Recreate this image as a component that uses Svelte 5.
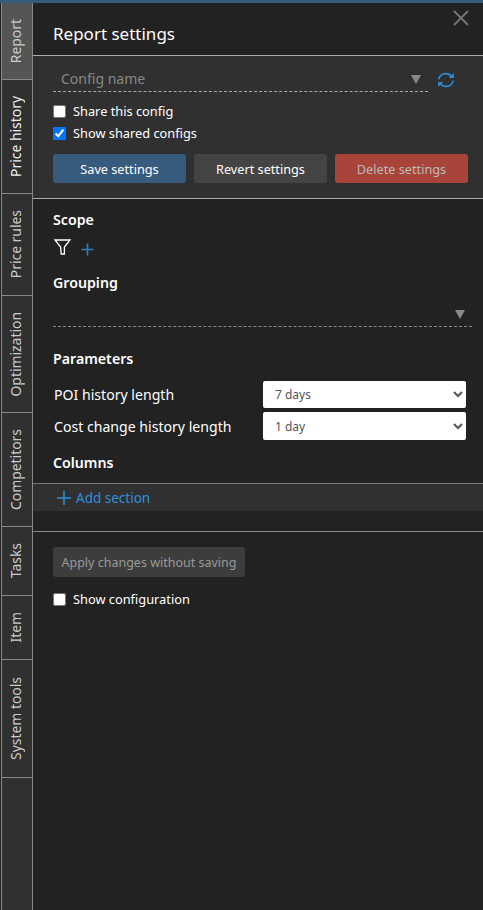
<script>
  const tabs = [
    { label: "Report", height: 77, active: true },
    { label: "Price history", height: 114 },
    { label: "Price rules", height: 102 },
    { label: "Optimization", height: 117 },
    { label: "Competitors", height: 114 },
    { label: "Tasks", height: 69 },
    { label: "Item", height: 64 },
    { label: "System tools", height: 118 },
  ];

  const params = [
    { label: "POI history length", value: "7 days", options: ["1 day", "7 days", "30 days"] },
    { label: "Cost change history length", value: "1 day", options: ["1 day", "7 days", "30 days"] },
  ];
</script>

<div class="page">
  <div class="topbar"></div>
  <div class="body">
    <nav class="sidebar">
      {#each tabs as tab}
        <div class="tab" class:active={tab.active} style:height={tab.height + "px"}>
          <span>{tab.label}</span>
        </div>
      {/each}
    </nav>

    <main class="panel">
      <header class="head">
        <h1>Report settings</h1>
        <svg class="close" viewBox="0 0 16 16" width="16" height="16">
          <path d="M1 1L15 15M15 1L1 15" stroke="#777" stroke-width="1.8" fill="none" />
        </svg>
      </header>

      <section class="config">
        <div class="config-row">
          <div class="combo">
            <span class="placeholder">Config name</span>
            <span class="caret"></span>
          </div>
          <svg class="refresh" viewBox="0 0 18 16" width="18" height="16" fill="none" stroke="#2f8fdc" stroke-width="1.6">
            <path d="M1.8 7.4C2.4 4 5.4 1.6 8.8 1.6C11.6 1.6 13.8 3 15 5.2" />
            <path d="M16.8 1V6H11.8Z" fill="#2f8fdc" stroke="none" />
            <path d="M16.2 8.6C15.6 12 12.6 14.4 9.2 14.4C6.4 14.4 4.2 13 3 10.8" />
            <path d="M1.2 15V10H6.2Z" fill="#2f8fdc" stroke="none" />
          </svg>
        </div>
        <label class="check"><input type="checkbox" /><span>Share this config</span></label>
        <label class="check second"><input type="checkbox" checked /><span>Show shared configs</span></label>
        <div class="buttons">
          <button class="btn primary">Save settings</button>
          <button class="btn">Revert settings</button>
          <button class="btn danger">Delete settings</button>
        </div>
      </section>

      <section class="settings">
        <h2>Scope</h2>
        <div class="scope-icons">
          <svg viewBox="0 0 17 16" width="17" height="16" fill="none" stroke="#fff" stroke-width="1.3">
            <path d="M1 1H16L10.4 8V15H7.2L6.6 8Z" />
          </svg>
          <svg class="plus" viewBox="0 0 13 13" width="13" height="13" stroke="#2f7fc0" stroke-width="1.6">
            <path d="M6.5 0.5V12.5M0.5 6.5H12.5" />
          </svg>
        </div>

        <h2 class="grouping">Grouping</h2>
        <div class="group-combo"><span class="caret"></span></div>

        <h2 class="parameters">Parameters</h2>
        <div class="params">
          {#each params as param}
            <div class="param">
              <span>{param.label}</span>
              <select value={param.value}>
                {#each param.options as option}
                  <option>{option}</option>
                {/each}
              </select>
            </div>
          {/each}
        </div>

        <h2 class="columns">Columns</h2>
      </section>

      <div class="add-section">
        <svg viewBox="0 0 14 14" width="14" height="14" stroke="#2f8fdc" stroke-width="1.5">
          <path d="M7 0V14M0 7H14" />
        </svg>
        <span>Add section</span>
      </div>

      <section class="footer">
        <button class="btn apply">Apply changes without saving</button>
        <label class="check"><input type="checkbox" /><span>Show configuration</span></label>
      </section>
    </main>
  </div>
</div>

<style>
  :global(body) {
    margin: 0;
    background: #222;
  }

  .page {
    width: 483px;
    height: 910px;
    overflow: hidden;
    display: flex;
    flex-direction: column;
    background: #222;
    color: #fff;
    font-family: "Noto Sans", Roboto, sans-serif;
    font-size: 13px;
  }

  .topbar {
    height: 3px;
    background: #375a7f;
    flex: none;
  }

  .body {
    flex: 1;
    display: flex;
    min-height: 0;
  }

  .sidebar {
    width: 32px;
    margin-left: 1px;
    flex: none;
    box-sizing: border-box;
    border-left: 1px solid #888;
    border-right: 1px solid #888;
    background: #303030;
  }

  .tab {
    box-sizing: border-box;
    display: flex;
    align-items: center;
    justify-content: center;
    padding-right: 3px;
    border-bottom: 1px solid #888;
    color: #ccc;
  }

  .tab.active {
    background: #555;
  }

  .tab:nth-child(2) {
    color: #eee;
  }

  .tab span {
    writing-mode: vertical-rl;
    transform: rotate(180deg);
    white-space: nowrap;
    font-size: 13.9px;
  }

  .panel {
    flex: 1;
    min-width: 0;
    display: flex;
    flex-direction: column;
  }

  .head {
    height: 52px;
    flex: none;
    box-sizing: border-box;
    position: relative;
    padding: 19px 0 0 20px;
  }

  h1 {
    margin: 0;
    font-size: 17px;
    font-weight: 400;
    line-height: 23px;
  }

  .close {
    position: absolute;
    top: 7px;
    right: 14px;
  }

  .config {
    height: 144px;
    flex: none;
    box-sizing: border-box;
    background: #303030;
    border-top: 1px solid #aaa;
    border-bottom: 1px solid #aaa;
    padding: 11px 15px 0 20px;
  }

  .config-row {
    display: flex;
    align-items: center;
    gap: 9px;
    margin-right: 13px;
    height: 25px;
  }

  .combo {
    flex: 1;
    height: 25px;
    box-sizing: border-box;
    border-bottom: 1px dashed #aaa;
    display: flex;
    align-items: center;
    justify-content: space-between;
    padding: 0 7px 0 8px;
  }

  .placeholder {
    color: #888;
    font-size: 14px;
    margin-bottom: 2px;
  }

  .caret {
    width: 0;
    height: 0;
    border-left: 5px solid transparent;
    border-right: 5px solid transparent;
    border-top: 9px solid #888;
  }

  .refresh {
    flex: none;
  }

  .check {
    display: flex;
    align-items: center;
    gap: 7px;
    height: 22px;
    margin-top: 8px;
    font-size: 12.8px;
  }

  .check.second {
    margin-top: 0;
  }

  .check input {
    width: 13px;
    height: 13px;
    margin: 0;
    accent-color: #0075ff;
  }

  .buttons {
    display: flex;
    gap: 8px;
    margin-top: 10px;
  }

  .btn {
    height: 29px;
    width: 133px;
    border: 0;
    border-radius: 3px;
    background: #444;
    color: #fff;
    font-family: inherit;
    font-size: 12.7px;
    padding: 0;
  }

  .btn.primary {
    background: #375a7f;
  }

  .btn.danger {
    background: #a8443a;
    color: #bbb;
  }

  .settings {
    flex: none;
    padding: 11px 17px 0 20px;
    height: 284px;
    box-sizing: border-box;
  }

  h2 {
    margin: 0;
    font-size: 14.2px;
    font-weight: 600;
    line-height: 19px;
  }

  .scope-icons {
    display: flex;
    align-items: center;
    gap: 10px;
    height: 20px;
    margin-top: 8px;
    padding-left: 1px;
  }

  .plus {
    margin-top: 4px;
  }

  .grouping {
    margin-top: 16px;
  }

  .group-combo {
    height: 27px;
    margin-right: -6px;
    box-sizing: border-box;
    border-bottom: 1px dashed #888;
    display: flex;
    align-items: center;
    justify-content: flex-end;
    padding: 3px 7px 0 0;
    margin-top: 8px;
  }

  .parameters {
    margin-top: 22px;
  }

  .params {
    margin-top: 13px;
    display: flex;
    flex-direction: column;
    gap: 4px;
  }

  .param {
    display: flex;
    align-items: center;
    justify-content: space-between;
    padding-left: 1px;
    font-size: 14.1px;
  }

  .param + .param select {
    height: 28px;
  }

  select {
    width: 203px;
    height: 27px;
    box-sizing: border-box;
    border: 0;
    border-radius: 2px;
    background-color: #fff;
    color: #555;
    font-family: inherit;
    font-size: 12px;
    padding-left: 8px;
  }

  .columns {
    margin-top: 13px;
  }

  .add-section {
    height: 28px;
    flex: none;
    box-sizing: border-box;
    background: #303030;
    border-top: 1px solid #777;
    display: flex;
    align-items: center;
    gap: 5px;
    padding-left: 24px;
    color: #2f8fdc;
    font-size: 13.5px;
  }

  .footer {
    flex: 1;
    margin-top: 20px;
    border-top: 1px solid #888;
    padding: 15px 20px 0;
  }

  .footer .check {
    margin-top: 11px;
  }

  .btn.apply {
    display: block;
    width: 192px;
    height: 30px;
    background: #3d3d3d;
    color: #999;
    font-size: 12.5px;
  }
</style>
